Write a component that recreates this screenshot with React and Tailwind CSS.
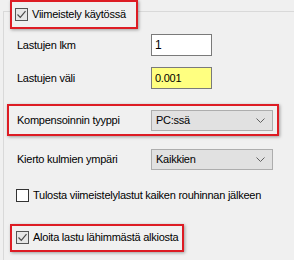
const Check = ({ checked }) => (
  <span
    className={
      checked
        ? "w-[13px] h-[13px] shrink-0 border border-[#555] bg-[#e6e6e6] flex items-center justify-center"
        : "w-[13px] h-[13px] shrink-0 border border-[#333] bg-white"
    }
  >
    {checked && (
      <svg width="11" height="11" viewBox="0 0 11 11">
        <path d="M1.5 5.5 L4.3 8.3 L9.5 2.2" fill="none" stroke="#4a4a4a" strokeWidth="1.2" />
      </svg>
    )}
  </span>
);

const Select = ({ value }) => (
  <div className="w-[122px] h-[21px] bg-[#e1e1e1] border border-[#adadad] flex items-center justify-between pl-[4px] pr-[7px]">
    <span>{value}</span>
    <svg width="9" height="5" viewBox="0 0 9 5">
      <path d="M0.5 0.5 L4.5 4.5 L8.5 0.5" fill="none" stroke="#606060" strokeWidth="1" />
    </svg>
  </div>
);

const redBox = "border-2 border-[#dd1c24] shadow-[1px_1px_3px_rgba(0,0,0,0.35)] bg-[#f0f0f0]";

export default function App() {
  return (
    <div className="w-[294px] h-[260px] bg-[#f0f0f0] overflow-hidden font-['Liberation_Sans',Arial,sans-serif] text-[11px] tracking-[-0.25px] text-black">
      <div className="ml-[3px] mt-[11px] h-[300px] border-l border-t border-[#d9d9d9]">
        <div className={`-mt-[12px] ml-[6px] w-[128px] h-[29px] flex items-center gap-[4px] pl-[3px] ${redBox}`}>
          <Check checked />
          <span>Viimeistely käytössä</span>
        </div>

        <div className="mt-[5px] flex items-center pl-[13px]">
          <span className="w-[134px]">Lastujen lkm</span>
          <div className="w-[61px] h-[22px] bg-white border border-[#7a7a7a] flex items-center pl-[3px] text-[12px]">1</div>
        </div>

        <div className="mt-[11px] flex items-center pl-[13px]">
          <span className="w-[134px]">Lastujen väli</span>
          <div className="w-[61px] h-[22px] bg-[#ffff80] border border-[#7a7a7a] flex items-center pl-[3px]">0.001</div>
        </div>

        <div className={`mt-[15px] ml-[3px] w-[272px] h-[32px] flex items-center pl-[8px] ${redBox}`}>
          <span className="w-[134px]">Kompensoinnin tyyppi</span>
          <Select value="PC:ssä" />
        </div>

        <div className="mt-[13px] flex items-center pl-[13px]">
          <span className="w-[134px]">Kierto kulmien ympäri</span>
          <Select value="Kaikkien" />
        </div>

        <div className="mt-[17px] flex items-center gap-[4px] pl-[12px]">
          <Check />
          <span>Tulosta viimeistelylastut kaiken rouhinnan jälkeen</span>
        </div>

        <div className={`mt-[20px] ml-[6px] w-[174px] h-[28px] flex items-center gap-[4px] pl-[4px] ${redBox}`}>
          <Check checked />
          <span>Aloita lastu lähimmästä alkiosta</span>
        </div>
      </div>
    </div>
  );
}
